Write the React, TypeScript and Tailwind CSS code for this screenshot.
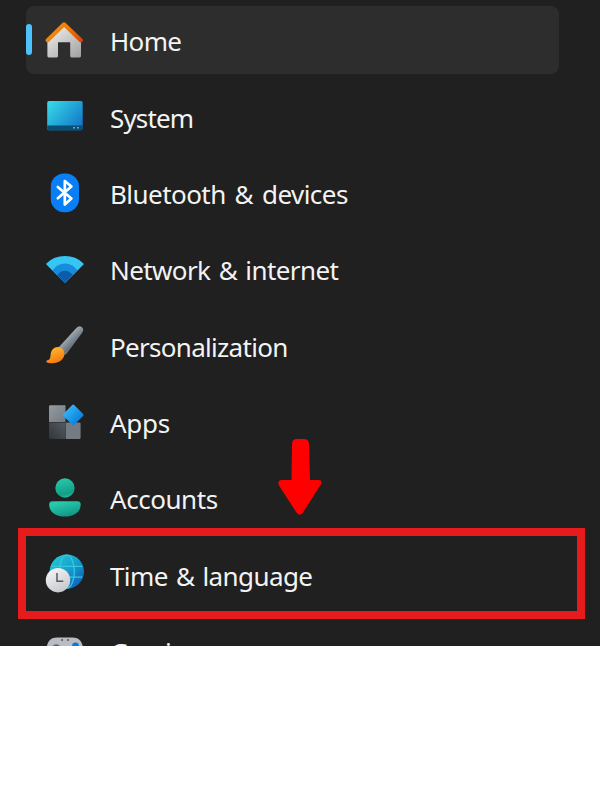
import type { ReactNode } from "react";

function Icon({ children }: { children: ReactNode }) {
  return (
    <svg viewBox="0 0 40 40" className="h-10 w-10 shrink-0" fill="none" aria-hidden="true">
      {children}
    </svg>
  );
}

function HomeIcon() {
  return (
    <Icon>
      <defs>
        <linearGradient id="houseBody" x1="8" y1="6" x2="32" y2="38" gradientUnits="userSpaceOnUse">
          <stop stopColor="#eeeeee" />
          <stop offset="1" stopColor="#a3a3a3" />
        </linearGradient>
        <linearGradient id="houseRoof" x1="3" y1="3" x2="36" y2="22" gradientUnits="userSpaceOnUse">
          <stop stopColor="#f28a12" />
          <stop offset="0.5" stopColor="#ee8008" />
          <stop offset="1" stopColor="#d84509" />
        </linearGradient>
      </defs>
      <path d="M19 5 36 21V36q0 1.4-1.4 1.4H26.500q-1.300 0-1.300-1.300V22.200H13V36.100q0 1.300-1.300 1.300H3.800Q2.400 37.400 2.400 36V21Z" fill="url(#houseBody)" />
      <path d="M2.700 20.300 19 4.300 35.800 20.300" stroke="url(#houseRoof)" strokeWidth="4.100" strokeLinecap="round" strokeLinejoin="round" />
    </Icon>
  );
}

function SystemIcon() {
  return (
    <Icon>
      <defs>
        <linearGradient id="screen" x1="4" y1="5" x2="34" y2="32" gradientUnits="userSpaceOnUse">
          <stop stopColor="#37dae6" />
          <stop offset="1" stopColor="#1278ca" />
        </linearGradient>
      </defs>
      <rect x="2.2" y="4.9" width="35.5" height="29.4" rx="1.8" fill="url(#screen)" />
      <path d="M2.2 29.6h35.5v2.9q0 1.8-1.8 1.8H4q-1.8 0-1.8-1.8Z" fill="#084e75" />
      <path d="M28.2 31.8h1.7M32 31.8h1.7" stroke="#78bad4" strokeWidth="1.6" />
    </Icon>
  );
}

function BluetoothIcon() {
  return (
    <Icon>
      <rect x="5.8" y="0.5" width="28.2" height="38.7" rx="13.2" fill="#087ff5" />
      <path d="m12.800 14 13.600 11.500-6.600 6V8l6.600 5.500L12.800 25.200" stroke="#fff" strokeWidth="2.700" strokeLinecap="round" strokeLinejoin="round" />
    </Icon>
  );
}

function NetworkIcon() {
  return (
    <Icon>
      <path d="M1.4 14.4Q9 7 20 7t18.5 7.4q.5.6 0 1.2L20.6 33.5q-.6.6-1.2 0L1.4 15.6q-.5-.6 0-1.2Z" fill="#36c6f3" />
      <path d="M7.6 21.3Q12.5 14.6 20 14.6t12.4 6.7L20.6 33.5q-.6.6-1.2 0Z" fill="#168cdb" />
      <path d="M12.2 26.1Q15.6 21.8 20 21.8t7.8 4.3l-7.2 7.4q-.6.6-1.2 0Z" fill="#0d5bab" />
    </Icon>
  );
}

function BrushIcon() {
  return (
    <Icon>
      <defs>
        <linearGradient id="handle" x1="21" y1="12" x2="28" y2="19" gradientUnits="userSpaceOnUse">
          <stop stopColor="#a6b0b8" />
          <stop offset="1" stopColor="#69747e" />
        </linearGradient>
        <linearGradient id="bristles" x1="8" y1="23" x2="14" y2="38" gradientUnits="userSpaceOnUse">
          <stop stopColor="#ffb52c" />
          <stop offset="1" stopColor="#f27510" />
        </linearGradient>
      </defs>
      <path d="M12.600 23.600 31.600 2.800c1.700-1.700 3.600-2 5.100-.8 1.900 1.400 2 3.300.7 5.400L21.200 29.200q-3.200 1.900-6-.6-2.600-2.300-2.600-5Z" fill="url(#handle)" />
      <path d="M6.800 25.600c3.200-5 9.800-4.300 11.900.1 2.300 5-1.300 9.900-5.900 11.600-4.100 1.500-9.100 1.200-11-.1-.9-.7-.5-1.700.7-1.900 4.300-.9 2-5.600 4.300-9.700Z" fill="url(#bristles)" />
    </Icon>
  );
}

function AppsIcon() {
  return (
    <Icon>
      <defs>
        <linearGradient id="tileLight" x1="4" y1="3" x2="20" y2="20" gradientUnits="userSpaceOnUse">
          <stop stopColor="#949ba3" />
          <stop offset="1" stopColor="#747b83" />
        </linearGradient>
        <linearGradient id="tileDark" x1="4" y1="37" x2="20" y2="20" gradientUnits="userSpaceOnUse">
          <stop stopColor="#30353a" />
          <stop offset="1" stopColor="#555b61" />
        </linearGradient>
        <linearGradient id="diamond" x1="20" y1="6" x2="35" y2="20" gradientUnits="userSpaceOnUse">
          <stop stopColor="#35bafa" />
          <stop offset="1" stopColor="#087cda" />
        </linearGradient>
      </defs>
      <path d="M5.4 3.2h15.1v16.9H4V4.6q0-1.4 1.4-1.4Z" fill="url(#tileLight)" />
      <path d="M4 20.4h16.5V37H5.4Q4 37 4 35.6Z" fill="url(#tileDark)" />
      <path d="M20.800 20.400h13.500q1.300 0 1.300 1.300v14q0 1.300-1.300 1.300H20.800Z" fill="#747b83" />
      <path d="m27.2 3 -8.9 8.9q-1 1 0 2l8.9 8.9q1 1 2 0l8.9-8.9q1-1 0-2L29.2 3q-1-1-2 0Z" fill="url(#diamond)" />
    </Icon>
  );
}

function AccountsIcon() {
  return (
    <Icon>
      <defs>
        <linearGradient id="person" x1="10" y1="0" x2="20" y2="39" gradientUnits="userSpaceOnUse">
          <stop stopColor="#28d0ae" />
          <stop offset="0.45" stopColor="#149d88" />
          <stop offset="0.6" stopColor="#28cdb0" />
          <stop offset="1" stopColor="#139685" />
        </linearGradient>
      </defs>
      <circle cx="20" cy="10" r="9.7" fill="url(#person)" />
      <path d="M7.2 23.2h25.3q3.2 0 3.2 3.1c0 7.7-6.4 12.3-15.9 12.3S4.2 34 4.2 26.3q0-3.1 3-3.1Z" fill="url(#person)" />
    </Icon>
  );
}

function TimeIcon() {
  return (
    <Icon>
      <defs>
        <linearGradient id="globe" x1="9" y1="4" x2="34" y2="31" gradientUnits="userSpaceOnUse">
          <stop stopColor="#22c5d2" />
          <stop offset="0.5" stopColor="#169fcd" />
          <stop offset="1" stopColor="#1262b8" />
        </linearGradient>
        <linearGradient id="clock" x1="6" y1="15" x2="19" y2="37" gradientUnits="userSpaceOnUse">
          <stop stopColor="#f4f4f5" />
          <stop offset="1" stopColor="#c5c8cc" />
        </linearGradient>
      </defs>
      <circle cx="21.8" cy="17.6" r="17.2" fill="url(#globe)" />
      <g stroke="#34c8df" strokeWidth="1.3">
        <path d="M6.4 12.3h30.8M6.4 23.2h30.8" />
        <ellipse cx="21.8" cy="17.6" rx="7.5" ry="16.5" />
      </g>
      <circle cx="13" cy="26.2" r="12.2" fill="url(#clock)" />
      <path d="M12 19v8.3h6.3" stroke="#55595d" strokeWidth="1.5" />
    </Icon>
  );
}

function GamingIcon() {
  return (
    <Icon>
      <path d="M12 6.4h15.5C35 6.4 38.2 12 38.2 20S35 34 27.5 34H12C4.5 34 1.4 28 1.4 20S4.5 6.4 12 6.4Z" fill="#b9bdc3" />
      <circle cx="11.3" cy="17.2" r="4" fill="#62666b" />
      <circle cx="30.5" cy="15" r="3.4" fill="#0c78d4" />
      <path d="M16.2 9.1h1.8M22 9.1h1.8" stroke="#44484d" strokeWidth="1.5" />
    </Icon>
  );
}

const items = [
  { label: "Home", icon: <HomeIcon />, tracking: "tracking-[-0.65px]" },
  { label: "System", icon: <SystemIcon />, tracking: "tracking-[-0.85px]" },
  { label: "Bluetooth & devices", icon: <BluetoothIcon />, tracking: "tracking-[-0.55px] [word-spacing:2.7px]" },
  { label: "Network & internet", icon: <NetworkIcon />, tracking: "tracking-[-0.6px] [word-spacing:2.1px]" },
  { label: "Personalization", icon: <BrushIcon />, tracking: "tracking-[-0.7px]" },
  { label: "Apps", icon: <AppsIcon />, tracking: "tracking-[-0.3px]" },
  { label: "Accounts", icon: <AccountsIcon />, tracking: "tracking-[-0.45px]" },
  { label: "Time & language", icon: <TimeIcon />, tracking: "tracking-[-0.6px] [word-spacing:2px]" },
  { label: "Gaming", icon: <GamingIcon />, tracking: "tracking-[-0.9px]" },
];

export default function App() {
  return (
    <div className="h-[800px] w-[600px] overflow-hidden bg-white font-['Noto_Sans',sans-serif]">
      <nav className="relative h-[646px] overflow-hidden bg-[#202020] pt-[1.8px] pl-[26px]">
        {items.map((item, i) => (
          <div key={item.label} className="flex h-[76.37px] items-center">
            <div
              className={
                i === 0
                  ? "flex h-[68.5px] w-[533px] items-center rounded-[8px] bg-[#2d2d2d]"
                  : "flex h-[68.5px] w-[533px] items-center"
              }
            >
              <span className={i === 0 ? "h-[31px] w-[6px] rounded-full bg-[#4cc2ff]" : "w-[6px]"} />
              <span className="ml-[13px] flex">{item.icon}</span>
              <span className={`ml-[25px] pt-[2.4px] text-[26px] leading-9 whitespace-nowrap text-[#f3f3f3] ${item.tracking}`}>
                {item.label}
              </span>
            </div>
          </div>
        ))}
        <div className="absolute top-[528px] left-[18px] h-[91px] w-[567px] border-[8px] border-[#e61b1b]" />
        <svg className="absolute top-[438px] left-[277px] h-[78px] w-[46px]" viewBox="0 0 46 78" aria-hidden="true">
          <path
            d="M15 6Q15.200 1 20 1H27Q31.700 1 32 6L33 42H41.500Q46.500 42.600 43.500 47L26 74.500Q22.700 79 19.400 74.500L2.300 48Q-.5 42.500 5 42H14.500Z"
            fill="#ff0000"
          />
        </svg>
      </nav>
    </div>
  );
}
